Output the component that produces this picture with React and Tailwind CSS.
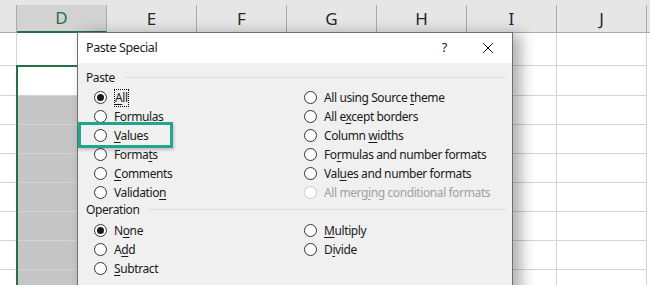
import React from 'react';

// Column letters shown in the sheet header
const columns = ['D', 'E', 'F', 'G', 'H', 'I', 'J'];

// Row heights below the header (bottom border included)
const rowHeights = [33, 30, 29, 29, 29, 29, 29, 29, 29];

// Paste options, left and right column
const pasteLeft = [
  { label: 'All', key: 'A', checked: true, focus: true },
  { label: 'Formulas' },
  { label: 'Values', key: 'V' },
  { label: 'Formats', key: 't', at: 5 },
  { label: 'Comments', key: 'C' },
  { label: 'Validation', key: 'n', at: 9 },
];

const pasteRight = [
  { label: 'All using Source theme', key: 'h', at: 17 },
  { label: 'All except borders', key: 'x', at: 5 },
  { label: 'Column widths', key: 'w', at: 7 },
  { label: 'Formulas and number formats', key: 'r', at: 2 },
  { label: 'Values and number formats', key: 'u', at: 3 },
  { label: 'All merging conditional formats', key: 'g', at: 8, disabled: true },
];

const opLeft = [
  { label: 'None', key: 'o', at: 1, checked: true },
  { label: 'Add', key: 'd', at: 1 },
  { label: 'Subtract', key: 'S' },
];

const opRight = [{ label: 'Multiply', key: 'M' }, { label: 'Divide', key: 'i', at: 1 }];

// Label with the access-key letter underlined
function Label({ label, at = 0, focus }) {
  const before = label.slice(0, at);
  const letter = label.slice(at, at + 1);
  const after = label.slice(at + 1);
  const hasKey = label !== 'Formulas';
  return (
    <span className={focus ? 'outline-1 outline-dotted outline-black -outline-offset-1 px-[1px]' : ''}>
      {before}
      {hasKey ? <span className="underline underline-offset-[2px]">{letter}</span> : letter}
      {after}
    </span>
  );
}

function Radio({ opt }) {
  return (
    <div className={`flex items-center h-[19px] gap-[7px] ${opt.disabled ? 'text-[#a0a0a0]' : 'text-[#1a1a1a]'}`}>
      <span
        className={`w-[13px] h-[13px] rounded-full border bg-white flex items-center justify-center shrink-0 ${
          opt.disabled ? 'border-[#cccccc]' : 'border-[#333333]'
        }`}
      >
        {opt.checked && <span className="w-[7px] h-[7px] rounded-full bg-[#1a1a1a]" />}
      </span>
      <Label label={opt.label} at={opt.at} focus={opt.focus} />
    </div>
  );
}

function Section({ title }) {
  return (
    <div className="flex items-center h-[15px] pl-[8px] pr-[6px] gap-[10px] text-[#1a1a1a]">
      <span>{title}</span>
      <div className="flex-1 h-px bg-[#dcdcdc]" />
    </div>
  );
}

export default function App() {
  return (
    <div
      className="relative w-[650px] h-[285px] overflow-hidden bg-white text-[12px] tracking-[-0.4px]"
      style={{ fontFamily: '"Noto Sans", "Open Sans", sans-serif' }}
    >
      {/* Column header row */}
      <div className="flex h-[33px] bg-[#e6e6e6] border-b border-[#ababab] pt-[5px] tracking-normal">
        <div className="w-[17px] border-r border-[#ababab]" />
        {columns.map((c) => (
          <div
            key={c}
            className={`w-[90px] shrink-0 flex items-center justify-center border-r border-[#ababab] text-[17px] ${
              c === 'D' ? 'bg-[#d2d2d2] text-[#217346] border-b-2 border-b-[#217346] -mb-px' : 'text-[#262626]'
            }`}
          >
            {c}
          </div>
        ))}
      </div>

      {/* Sheet rows */}
      {rowHeights.map((h, r) => (
        <div key={r} className="flex" style={{ height: h }}>
          <div className="w-[17px] border-r border-b border-[#d4d4d4]" />
          {columns.map((c) => (
            <div
              key={c}
              className={`w-[90px] shrink-0 border-r border-b border-[#d4d4d4] ${
                c === 'D' && r >= 2 ? 'bg-[#c6c6c6]' : ''
              }`}
            />
          ))}
        </div>
      ))}

      {/* Selected range outline */}
      <div className="absolute left-[16px] top-[65px] w-[93px] h-[240px] border-2 border-[#217346]" />

      {/* Paste Special dialog */}
      <div className="absolute left-[77px] top-[32px] w-[436px] h-[270px] bg-[#f0f0f0] border border-[#6f6f6f] shadow-[8px_2px_14px_rgba(0,0,0,0.32)]">
        <div className="h-[30px] bg-white flex items-center pl-[8px] pr-[18px] text-[12.5px] text-[#1a1a1a]">
          <span className="flex-1">Paste Special</span>
          <span className="mr-[35px] text-[13px]">?</span>
          <svg width="12" height="12" viewBox="0 0 12 12">
            <path d="M1 1 L11 11 M11 1 L1 11" stroke="#1a1a1a" strokeWidth="1" />
          </svg>
        </div>

        <div className="pt-[7px]">
          <Section title="Paste" />
          <div className="grid grid-cols-[210px_1fr] pl-[16px] mt-[3px]">
            <div className="flex flex-col">
              {pasteLeft.map((o) => (
                <Radio key={o.label} opt={o} />
              ))}
            </div>
            <div className="flex flex-col">
              {pasteRight.map((o) => (
                <Radio key={o.label} opt={o} />
              ))}
            </div>
          </div>

          <Section title="Operation" />
          <div className="grid grid-cols-[210px_1fr] pl-[16px] mt-[4px]">
            <div className="flex flex-col">
              {opLeft.map((o) => (
                <Radio key={o.label} opt={o} />
              ))}
            </div>
            <div className="flex flex-col">
              {opRight.map((o) => (
                <Radio key={o.label} opt={o} />
              ))}
            </div>
          </div>
        </div>
      </div>

      {/* Highlight around Values */}
      <div className="absolute left-[78px] top-[122px] w-[95px] h-[26px] border-[3px] border-[#20a68a] shadow-[1px_2px_3px_rgba(0,0,0,0.2)]" />
    </div>
  );
}
